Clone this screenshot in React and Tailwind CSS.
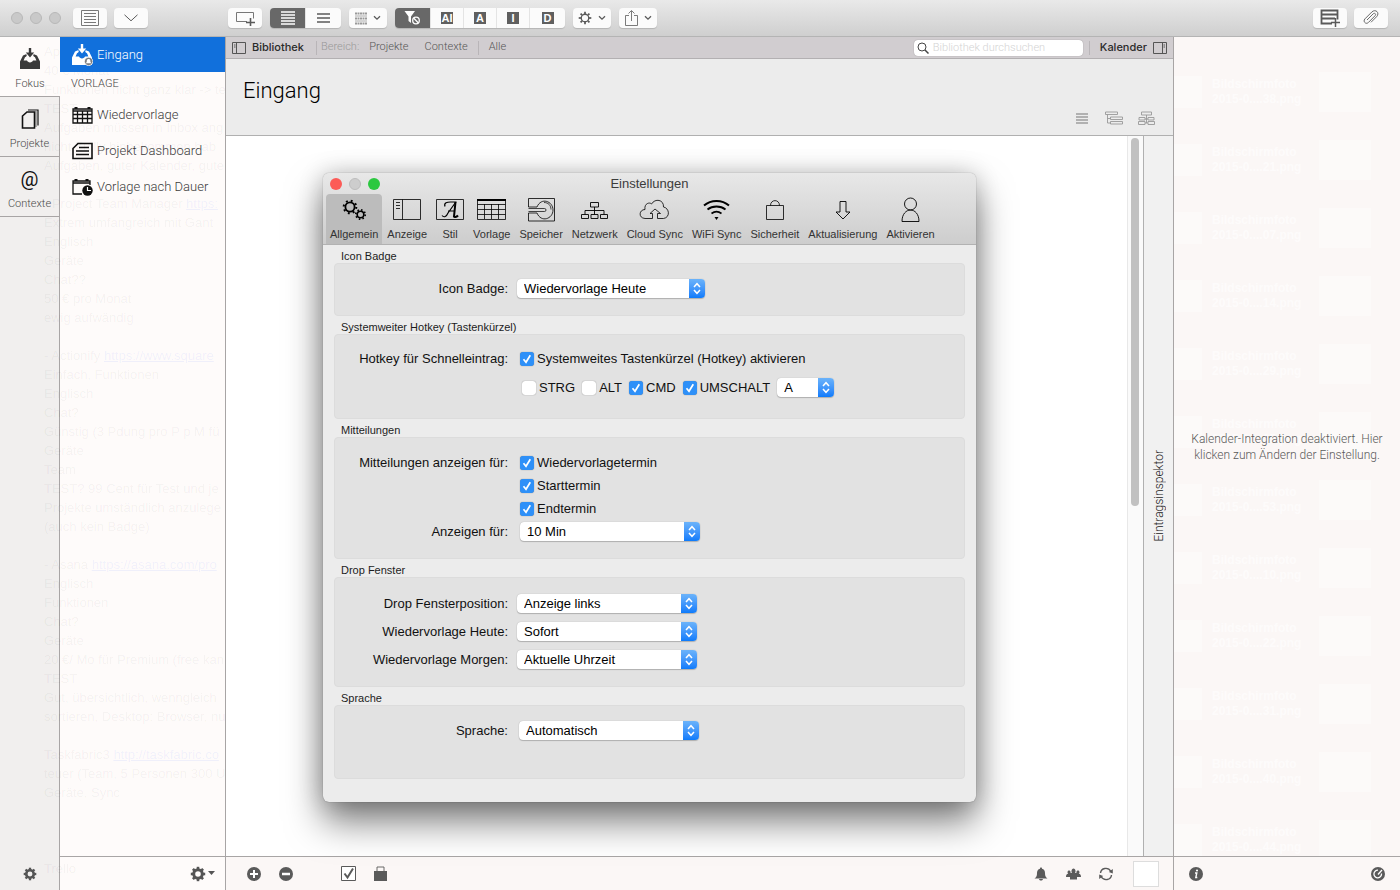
import React, { useState } from "react";

const notes = [
  ["App"],
  ["40 € Monat"],
  ["Funktionen nicht ganz klar -> te"],
  ["TEST"],
  ["Aufgaben müssen in Inbox ang"],
  ["nicht Zuilly hinbekommen hab"],
  ["Aufgaben, guter Kalender, gute"],
  [""],
  ["- Project Team Manager ", "https:"],
  ["Extrem umfangreich mit Gant"],
  ["Englisch"],
  ["Geräte"],
  ["Chat??"],
  ["50 € pro Monat"],
  ["ewig aufwändig"],
  [""],
  ["- Actionify ", "https://www.square"],
  ["Einfach, Funktionen"],
  ["Englisch"],
  ["Chat?"],
  ["Günstig (3 Pdung pro P p M fü"],
  ["Geräte"],
  ["Team"],
  ["TEST? 99 Cent für Test und je"],
  ["Projekte umständlich anzulege"],
  ["(auch kein Badge)"],
  [""],
  ["- Asana ", "https://asana.com/pro"],
  ["Englisch"],
  ["Funktionen"],
  ["Chat?"],
  ["Geräte"],
  ["20 €/ Mo für Premium (free kan"],
  ["TEST"],
  ["Gut, übersichtlich, wenngleich"],
  ["sortieren, Desktop: Browser, nu"],
  [""],
  ["Taskfabric3 ", "http://taskfabric.co"],
  ["teuer (Team, 5 Personen 300 U"],
  ["Geräte, Sync"],
  [""],
  [""],
  [""],
  ["Trello"],
];

const files = ["38", "21", "07", "14", "29", "35", "53", "10", "22", "31", "40", "44"];

function Svg({ w, h = w, children, className = "" }) {
  return (
    <svg
      width={w}
      height={h}
      viewBox={`0 0 ${w} ${h}`}
      fill="none"
      stroke="currentColor"
      className={`shrink-0 ${className}`}
      aria-hidden="true"
    >
      {children}
    </svg>
  );
}

/* ---------- shared icons ---------- */

function Gear({ size = 16, filled = false }) {
  const teeth = [0, 45, 90, 135, 180, 225, 270, 315];
  return (
    <svg width={size} height={size} viewBox="0 0 16 16" fill="none" stroke="currentColor" className="shrink-0" aria-hidden="true">
      <circle cx="8" cy="8" r="4.3" strokeWidth={filled ? 3 : 1.5} />
      {teeth.map((a) => (
        <path key={a} d="M8 .8v2.6" strokeWidth={filled ? 2.6 : 2} transform={`rotate(${a} 8 8)`} />
      ))}
    </svg>
  );
}

function Chevron() {
  return (
    <Svg w={8} h={6}>
      <path d="M1 1.2 4 4.2 7 1.2" strokeWidth="1.3" />
    </Svg>
  );
}

function Inbox({ badge }) {
  return (
    <Svg w={22}>
      <path
        d="M1 13.5 4 7.5 7 6.2C8.4 6.4 8 8.4 6 9.2L4.6 12.6H8C8.6 15 13.4 15 14 12.6H17.4L16 9.2C14 8.4 13.6 6.4 15 6.2L18 7.5 21 13.5V21H1Z"
        fill="currentColor"
        stroke="none"
      />
      <path d="M9.8 0h2.4v4.6h3L11 9.4 6.8 4.6h3Z" fill="currentColor" stroke="none" />
      {badge && (
        <>
          <circle cx="17.6" cy="17.4" r="4.2" fill="#7d7d7d" stroke="#fff" strokeWidth=".8" />
          <path d="M14.8 19.2c.9-.8 1-1.5 1-2.4 0-2.3 3.6-2.3 3.6 0 0 .9.1 1.6 1 2.4Z" fill="#fff" stroke="none" />
        </>
      )}
    </Svg>
  );
}

function ListIcon({ w = 14, gap = 3, count = 4, stroke = 1.5 }) {
  const h = gap * (count - 1) + 4;
  return (
    <Svg w={w} h={h}>
      {Array.from({ length: count }, (_, i) => (
        <path key={i} d={`M0 ${2 + i * gap}h${w}`} strokeWidth={stroke} />
      ))}
    </Svg>
  );
}

/* ---------- toolbar ---------- */

function ToolButton({ label, children, className = "w-[34px]" }) {
  return (
    <button
      type="button"
      aria-label={label}
      className={`flex h-5 items-center justify-center gap-1.5 rounded bg-[#fbfbfb] text-[#5a5a5a] shadow-[0_1px_1px_rgba(0,0,0,0.15)] ${className}`}
    >
      {children}
    </button>
  );
}

function Segment({ label, active, children, className = "w-[33px]" }) {
  return (
    <button
      type="button"
      aria-label={label}
      aria-pressed={!!active}
      className={`flex h-5 items-center justify-center border-r border-[#e4e4e4] last:border-r-0 ${
        active ? "bg-[#686868] text-white" : "bg-[#fbfbfb] text-[#5a5a5a]"
      } ${className}`}
    >
      {children}
    </button>
  );
}

function Letter({ children }) {
  return (
    <span className="flex h-3 w-3 items-center justify-center bg-[#5f5f5f] font-['Liberation_Sans',sans-serif] text-[11px] leading-3 font-bold text-white">
      {children}
    </span>
  );
}

function TitleBar() {
  return (
    <header className="flex h-[37px] shrink-0 items-center border-b border-[#b4b4b4] bg-linear-to-b from-[#e9e9e9] to-[#cfcfcf]">
      <div className="flex w-[228px] shrink-0 items-center gap-[7px] pl-[11px]">
        {[0, 1, 2].map((i) => (
          <span key={i} className="h-3 w-3 rounded-full border border-[#b8b8b8] bg-[#c9c9c9]" />
        ))}
        <div className="ml-[5px] flex gap-[7px]">
          <ToolButton label="Liste">
            <Svg w={18} h={16} className="text-[#777]">
              <path d="M.5.5h17v15H.5zM3 3.5h12M3 6.5h12M3 9.5h12M3 12.5h12" />
            </Svg>
          </ToolButton>
          <ToolButton label="Aufklappen">
            <Svg w={14} h={8}>
              <path d="m.5.8 6.5 6 6.5-6" />
            </Svg>
          </ToolButton>
        </div>
      </div>

      <div className="flex flex-1 items-center gap-2">
        <ToolButton label="Neuer Eintrag">
          <Svg w={20} h={16}>
            <path d="M12 11.5H1.5v-9h17v6" className="text-[#777]" stroke="currentColor" />
            <path d="M15.5 8v8M11 12.5h9" strokeWidth="1.6" />
          </Svg>
        </ToolButton>
        <div className="flex overflow-hidden rounded shadow-[0_1px_1px_rgba(0,0,0,0.15)]">
          <Segment label="Kompakt" active className="w-9">
            <ListIcon count={5} gap={3} stroke={1.6} />
          </Segment>
          <Segment label="Normal" className="w-[35px]">
            <ListIcon w={13} count={3} gap={4} />
          </Segment>
        </div>
        <ToolButton label="Gruppieren" className="w-[38px]">
          <Svg w={12} h={13} className="text-[#999]">
            <path d="M0 1.5h12M0 6.5h12M0 11.5h12" strokeWidth="2" strokeDasharray="2 .5" />
            <path d="M0 4h12M0 9h12" strokeWidth=".8" />
          </Svg>
          <Chevron />
        </ToolButton>
        <div className="flex overflow-hidden rounded shadow-[0_1px_1px_rgba(0,0,0,0.15)]">
          <Segment label="Filter aus" active className="w-9">
            <Svg w={17} h={14}>
              <path d="M.5 0h10.5L7 5.5V12L4.5 10V5.5Z" fill="currentColor" stroke="none" />
              <circle cx="12" cy="9.5" r="4.8" fill="#686868" stroke="none" />
              <circle cx="12" cy="9.5" r="3.3" strokeWidth="1.3" />
              <path d="m9.8 7.3 4.4 4.4" strokeWidth="1.3" />
            </Svg>
          </Segment>
          <Segment label="Alle Filter"><Letter>AI</Letter></Segment>
          <Segment label="Filter A"><Letter>A</Letter></Segment>
          <Segment label="Filter I"><Letter>I</Letter></Segment>
          <Segment label="Filter D" className="w-[35px]"><Letter>D</Letter></Segment>
        </div>
        <ToolButton label="Aktionen" className="w-[38px]">
          <Gear size={14} />
          <Chevron />
        </ToolButton>
        <ToolButton label="Teilen" className="w-[38px]">
          <Svg w={13} h={16}>
            <path d="M4 5.5H.5v10h12v-10H9M6.5 11V1M3.5 3.5l3-3 3 3" strokeWidth=".8" />
          </Svg>
          <Chevron />
        </ToolButton>
      </div>

      <div className="flex items-center gap-[7px] pr-3">
        <ToolButton label="Liste hinzufügen">
          <Svg w={20} h={18}>
            <path d="M12 14.5H1.5v-13h16v9M1 5.5h16M1 9.5h14" strokeWidth="1.8" />
            <path d="M15.5 9v9M11 13.5h9" strokeWidth="1.5" />
          </Svg>
        </ToolButton>
        <ToolButton label="Anhang">
          <Svg w={16} h={16}>
            <path d="m4 10 6-6c1.7-1.7 3.6.2 2 1.8L5.5 12.4C3 15-.6 11.4 2 8.8L8.8 2c3.8-3.6 8.4 1 4.8 4.7L8 12.3" strokeWidth=".9" />
          </Svg>
        </ToolButton>
      </div>
    </header>
  );
}

/* ---------- left side ---------- */

function RailTab({ label, active, children }) {
  return (
    <button
      type="button"
      className={`flex w-full flex-col items-center border-b border-[#a8a5a5] pt-2.5 text-[11px] font-light text-[#4a4a4a] ${
        active ? "h-[60px] bg-[#fefbfa]" : "h-[60px] border-r bg-[#f1efee]"
      }`}
    >
      <span className="flex h-6 items-center text-[#111]">{children}</span>
      <span className="mt-1 leading-[18px]">{label}</span>
    </button>
  );
}

function Rail() {
  return (
    <nav className="flex w-[60px] shrink-0 flex-col bg-[#f1efee]">
      <RailTab label="Fokus" active>
        <span className="text-[#3a3a3a]"><Inbox /></span>
      </RailTab>
      <RailTab label="Projekte">
        <Svg w={18} h={20}>
          <path d="M1.5 7 6 3h7.500v16h-12Z" strokeWidth="1.6" />
          <path d="M7 1h10v15.5" strokeWidth="1.2" />
          <path d="M15 2v16" strokeWidth=".6" />
        </Svg>
      </RailTab>
      <RailTab label="Contexte">
        <span className="text-[20px] leading-5 font-normal">@</span>
      </RailTab>
      <div className="flex flex-1 items-end justify-center border-r border-[#a8a5a5] pb-[9px]">
        <button type="button" aria-label="Einstellungen" className="text-[#555]">
          <Gear size={14} filled />
        </button>
      </div>
    </nav>
  );
}

function SideItem({ icon, children }) {
  return (
    <li>
      <a href="#vorlage" className="flex h-9 items-center gap-1 pl-3 text-[13px] font-light text-[#3c3c3c]">
        <span className="text-[#111]">{icon}</span>
        {children}
      </a>
    </li>
  );
}

function Sidebar() {
  return (
    <aside className="flex w-[166px] shrink-0 flex-col border-r border-[#a8a5a5] bg-[#fefbfa]">
      <a href="#eingang" className="relative z-10 flex h-[35px] items-center gap-1 bg-[#1170dc] pl-[11px] text-[13px] font-light text-white">
        <Inbox badge />
        Eingang
      </a>
      <h2 className="flex h-[25px] items-center pl-[11px] text-[11px] font-light text-[#444]">VORLAGE</h2>
      <ul className="flex-1">
        <SideItem
          icon={
            <Svg w={21} h={18}>
              <path d="M1 3h19v14H1zM1 5h19M1 8.5h19M1 12.5h19M5.5 5v12M10.5 5v12M15.5 5v12" strokeWidth="1.3" />
              <path d="M4 1v2M17 1v2" strokeWidth="3" />
            </Svg>
          }
        >
          Wiedervorlage
        </SideItem>
        <SideItem
          icon={
            <Svg w={21} h={18}>
              <path d="M1 6.5 6 1.5h14v15H1Z" strokeWidth="1.6" />
              <path d="M7 5.5h10M4 9h13M4 12.5h13" strokeWidth="1.4" />
            </Svg>
          }
        >
          Projekt Dashboard
        </SideItem>
        <SideItem
          icon={
            <Svg w={21} h={18}>
              <path d="M10 16H1V3h17v4M1 5h17" strokeWidth="1.3" />
              <path d="M4 1v2M15 1v2" strokeWidth="3" />
              <circle cx="15.5" cy="12.5" r="5.2" fill="currentColor" stroke="none" />
              <path d="M15.5 9v3.5H19" stroke="#fff" strokeWidth="1.2" />
            </Svg>
          }
        >
          Vorlage nach Dauer
        </SideItem>
      </ul>
      <div className="flex h-[34px] items-center justify-end border-t border-[#a8a5a5] pr-2.5">
        <button type="button" aria-label="Aktionen" className="flex items-center gap-0.5 text-[#555]">
          <Gear size={16} filled />
          <Svg w={7} h={5}>
            <path d="M0 0h7L3.5 4Z" fill="currentColor" stroke="none" />
          </Svg>
        </button>
      </div>
    </aside>
  );
}

/* note text of the window behind shines through the translucent sidebar */
function NotesBehind() {
  return (
    <div aria-hidden="true" className="pointer-events-none absolute inset-0 overflow-hidden pt-[5px] pl-11 font-['Liberation_Sans',sans-serif] text-[13px] leading-[19px] whitespace-nowrap text-black/5">
      {notes.map(([text, link], i) => (
        <p key={i} className="h-[19px]">
          {text}
          {link && <span className="text-[#4060ff]/8 underline">{link}</span>}
        </p>
      ))}
    </div>
  );
}

/* ---------- preferences window ---------- */

const tabs = [
  {
    label: "Allgemein",
    icon: (
      <Svg w={26} h={24}>
        <g transform="translate(1 1)">
          <circle cx="8" cy="8" r="4.6" strokeWidth="1.8" />
          <circle cx="8" cy="8" r="6.3" strokeWidth="2" strokeDasharray="1.9 3.05" />
          <circle cx="18.5" cy="15.5" r="3.3" strokeWidth="1.6" />
          <circle cx="18.5" cy="15.5" r="4.7" strokeWidth="1.7" strokeDasharray="1.5 2.19" />
        </g>
      </Svg>
    ),
  },
  {
    label: "Anzeige",
    icon: (
      <Svg w={28} h={22}>
        <path d="M.5.5h27v20H.5zM9.5.5v20M3 3.5h4M3 6.5h4M3 9.5h4" strokeWidth=".8" />
      </Svg>
    ),
  },
  {
    label: "Stil",
    icon: (
      <Svg w={28} h={22}>
        <path d="M.5.5h27v20H.5z" strokeWidth=".8" />
        <path d="M6 16.5c2 2.5 4.5 1 6-2.5l7.5-10.5M12 12h7M9 7.5c-1.5-4 2.5-4.5 5.5-4.5h6" strokeWidth="1.2" />
        <path d="M19.5 3 18 17.5c1.5.8 3 .2 4-1" strokeWidth="2" />
      </Svg>
    ),
  },
  {
    label: "Vorlage",
    icon: (
      <Svg w={29} h={22}>
        <path d="M.5 1.5h28v19H.5zM.5 5.5h28M.5 10.5h28M.5 15.5h28M7.5 5v15M14.5 5v15M21.5 5v15" strokeWidth=".8" />
        <path d="M0 1h29" strokeWidth="2" />
      </Svg>
    ),
  },
  {
    label: "Speicher",
    icon: (
      <Svg w={27} h={24}>
        <path d="M.5 9V.5h26V23H.5v-8" strokeWidth=".8" />
        <path d="M.5 9H9C13-1 25 3 25 12S13 25 9 15H.5" strokeWidth=".8" />
        <path d="M.5 10.5h16a1.5 1.5 0 0 1 0 3H.5M16 4.5c4.500 0 7 3.200 7 7" strokeWidth=".7" />
      </Svg>
    ),
  },
  {
    label: "Netzwerk",
    icon: (
      <Svg w={27} h={20}>
        <path d="M9.5 2.5h8V7h-8zM.5 14.5h7v4h-7zM10 14.5h7v4h-7zM19.5 14.5h7v4h-7zM13.5 7v7.5M4 14.5v-4h19v4" strokeWidth=".9" />
      </Svg>
    ),
  },
  {
    label: "Cloud Sync",
    icon: (
      <Svg w={31} h={22}>
        <path d="M12 19.5H6C-1 19 0 10.5 6 10.5 5 4 11 3 12.5 5 16-1 25 .5 24.5 8c6 1 7 10.5 0 11.5h-6v-5h3L16 10l-5 4.5h2.5v5H12" strokeWidth=".8" />
      </Svg>
    ),
  },
  {
    label: "WiFi Sync",
    icon: (
      <Svg w={27} h={22}>
        <path d="M1 6.5c7-6 18-6 25 0" strokeWidth="2" />
        <path d="M4.5 10.5c5-4 13-4 18 0" strokeWidth="1.8" />
        <path d="M8.5 14.5c3-2.3 7-2.3 10 0" strokeWidth="1.6" />
        <path d="m11.5 18 2 3 2-3Z" fill="currentColor" stroke="none" />
      </Svg>
    ),
  },
  {
    label: "Sicherheit",
    icon: (
      <Svg w={18} h={20}>
        <path d="M.5 5.5h17v14H.5zM4.5 5.5c0-6.5 9-6.5 9 0" strokeWidth=".8" />
      </Svg>
    ),
  },
  {
    label: "Aktualisierung",
    icon: (
      <Svg w={16} h={20}>
        <path d="M5 1.5h6V12h4l-7 7-7-7h4Z" strokeWidth=".9" />
      </Svg>
    ),
  },
  {
    label: "Aktivieren",
    icon: (
      <Svg w={19} h={26}>
        <circle cx="9.5" cy="7" r="6" strokeWidth=".9" />
        <path d="M1 24.5c0-15.3 17-15.3 17 0Z" strokeWidth=".9" />
      </Svg>
    ),
  },
];

function Select({ id, label, value, options, className }) {
  return (
    <span className={`relative inline-flex h-5 rounded ${className}`}>
      <select
        id={id}
        aria-label={label}
        defaultValue={value}
        className="h-[19px] w-full appearance-none rounded bg-white pr-5 pl-[7px] text-[13px] leading-[18px] text-black shadow-[0_0_1px_rgba(0,0,0,0.3),0_1px_1px_rgba(0,0,0,0.2)]"
      >
        {options.map((o) => (
          <option key={o}>{o}</option>
        ))}
      </select>
      <span className="pointer-events-none absolute top-0 right-0 flex h-[19px] w-4 items-center justify-center rounded-r bg-linear-to-b from-[#6bb3fa] to-[#0b7bfb] text-white">
        <Svg w={8} h={13}>
          <path d="m1 5 3-3.3L7 5M1 8l3 3.3L7 8" strokeWidth="1.5" />
        </Svg>
      </span>
    </span>
  );
}

function Check({ label, initial = true }) {
  const [on, setOn] = useState(initial);
  return (
    <label className="flex items-center gap-[3px]">
      <span className="relative flex">
        <input
          type="checkbox"
          checked={on}
          onChange={() => setOn(!on)}
          className="h-3.5 w-3.5 appearance-none rounded-[3px] bg-white shadow-[0_0_1px_rgba(0,0,0,0.5)] checked:bg-[#2e90f8]"
        />
        {on && (
          <span className="pointer-events-none absolute inset-0 text-white">
            <Svg w={14}>
              <path d="m3.5 7.3 2.5 3 4.3-7" strokeWidth="1.7" />
            </Svg>
          </span>
        )}
      </span>
      {label}
    </label>
  );
}

function Section({ title, children, className }) {
  return (
    <section>
      <h3 className="flex h-[18px] items-end pl-[7px] text-[11px] leading-[14px] text-[#1c1c1c]">{title}</h3>
      <div className={`flex flex-col rounded border border-[#dcdcdc] bg-[#e2e2e2] text-[13px] leading-5 text-[#111] ${className}`}>
        {children}
      </div>
    </section>
  );
}

function Row({ label, htmlFor, indent = "pl-[9px]", children }) {
  return (
    <div className="flex h-5 items-center">
      <label htmlFor={htmlFor} className="w-[173px] shrink-0 text-right">
        {label}
      </label>
      <div className={`flex items-center ${indent}`}>{children}</div>
    </div>
  );
}

function Preferences() {
  const [tab, setTab] = useState("Allgemein");
  return (
    <div
      role="dialog"
      aria-label="Einstellungen"
      className="absolute top-[136px] left-[97px] w-[653px] rounded-md bg-[#ececec] pb-[23px] font-['Liberation_Sans',Arial,sans-serif] shadow-[0_0_1px_rgba(0,0,0,0.5),0_20px_36px_rgba(0,0,0,0.5),0_0_24px_rgba(0,0,0,0.2)]"
    >
      <div className="rounded-t-md border-b border-[#b2b2b2] bg-linear-to-b from-[#e8e8e8] to-[#cdcdcd]">
        <div className="grid h-[21px] grid-cols-3 items-center">
          <div className="flex gap-[7px] pl-[7px]">
            <span className="h-3 w-3 rounded-full bg-[#fc5b57]" />
            <span className="h-3 w-3 rounded-full border border-[#bdbdbd] bg-[#cdcdcd]" />
            <span className="h-3 w-3 rounded-full bg-[#2cc840]" />
          </div>
          <h2 className="text-center text-[13px] text-[#3c3c3c]">Einstellungen</h2>
        </div>
        <div className="flex gap-px pl-[3px]" role="tablist">
          {tabs.map((t) => (
            <button
              key={t.label}
              type="button"
              role="tab"
              aria-selected={tab === t.label}
              onClick={() => setTab(t.label)}
              className={`flex h-[50px] flex-col items-center rounded-t px-1 text-[11px] leading-4 ${
                tab === t.label ? "bg-[#bcbcbc]" : ""
              }`}
            >
              <span className="flex h-8 items-center text-black">{t.icon}</span>
              <span className="whitespace-nowrap text-[#333]">{t.label}</span>
            </button>
          ))}
        </div>
      </div>

      <div className="px-[11px]">
        <Section title="Icon Badge" className="pt-[15px] pb-4">
          <Row label="Icon Badge:" htmlFor="badge">
            <Select id="badge" value="Wiedervorlage Heute" options={["Wiedervorlage Heute", "Eingang"]} className="w-[188px]" />
          </Row>
        </Section>

        <Section title="Systemweiter Hotkey (Tastenkürzel)" className="gap-[9px] pt-3.5 pb-5">
          <Row label="Hotkey für Schnelleintrag:" indent="pl-3">
            <Check label="Systemweites Tastenkürzel (Hotkey) aktivieren" />
          </Row>
          <Row indent="gap-[7px] pl-3.5">
            <Check label="STRG" initial={false} />
            <Check label="ALT" initial={false} />
            <Check label="CMD" />
            <Check label="UMSCHALT" />
            <Select label="Taste" value="A" options={["A", "B", "C", "D"]} className="w-[57px]" />
          </Row>
        </Section>

        <Section title="Mitteilungen" className="gap-[3px] pt-[15px] pb-4">
          <Row label="Mitteilungen anzeigen für:" indent="pl-3">
            <Check label="Wiedervorlagetermin" />
          </Row>
          <Row indent="pl-3">
            <Check label="Starttermin" />
          </Row>
          <Row indent="pl-3">
            <Check label="Endtermin" />
          </Row>
          <Row label="Anzeigen für:" htmlFor="dauer" indent="pl-3">
            <Select id="dauer" value="10 Min" options={["5 Min", "10 Min", "30 Min"]} className="w-[180px]" />
          </Row>
        </Section>

        <Section title="Drop Fenster" className="gap-2 py-4">
          <Row label="Drop Fensterposition:" htmlFor="position">
            <Select id="position" value="Anzeige links" options={["Anzeige links", "Anzeige rechts"]} className="w-[180px]" />
          </Row>
          <Row label="Wiedervorlage Heute:" htmlFor="heute">
            <Select id="heute" value="Sofort" options={["Sofort", "Aktuelle Uhrzeit"]} className="w-[180px]" />
          </Row>
          <Row label="Wiedervorlage Morgen:" htmlFor="morgen">
            <Select id="morgen" value="Aktuelle Uhrzeit" options={["Sofort", "Aktuelle Uhrzeit"]} className="w-[180px]" />
          </Row>
        </Section>

        <Section title="Sprache" className="pt-[15px] pb-[37px]">
          <Row label="Sprache:" htmlFor="sprache" indent="pl-[11px]">
            <Select id="sprache" value="Automatisch" options={["Automatisch", "Deutsch", "Englisch"]} className="w-[180px]" />
          </Row>
        </Section>
      </div>
    </div>
  );
}

/* ---------- main area ---------- */

function PanelIcon({ flip }) {
  return (
    <Svg w={14} h={12} className={flip ? "-scale-x-100 text-[#555]" : "text-[#555]"}>
      <path d="M.5.5h13v11H.5zM4.5.5v11M2 3h1.500M2 5h1.500" />
    </Svg>
  );
}

function LibraryBar() {
  return (
    <div className="flex h-[22px] shrink-0 items-center border-b border-[#b3b0b2] bg-[#d1cdd0] px-1.5 text-[11px] font-light text-[#555]">
      <button type="button" className="flex items-center gap-1.5 font-['Inter',sans-serif] font-medium text-[#2a2a2a]">
        <PanelIcon />
        Bibliothek
      </button>
      <span className="mr-1 ml-3 h-3.5 border-l border-[#b9b5b8]" />
      <span className="text-[#999]">Bereich:</span>
      <button type="button" className="ml-2.5">Projekte</button>
      <button type="button" className="ml-4">Contexte</button>
      <span className="mx-2.5 h-3.5 border-l border-[#b9b5b8]" />
      <button type="button">Alle</button>
      <label className="ml-auto flex h-4 w-[169px] items-center gap-1 rounded-sm bg-white px-[3px] shadow-[0_0_1px_rgba(0,0,0,0.4)]">
        <Svg w={12} className="text-[#444]">
          <circle cx="5" cy="5" r="4" />
          <path d="m8 8 3.5 3.5" strokeWidth="1.5" />
        </Svg>
        <input
          type="search"
          aria-label="Bibliothek durchsuchen"
          placeholder="Bibliothek durchsuchen"
          className="w-full min-w-0 bg-transparent text-[11px] leading-4 outline-none placeholder:text-[#d4d4d4]"
        />
      </label>
      <span className="mr-2.5 ml-1.5 h-3.5 border-l border-[#b9b5b8]" />
      <button type="button" className="flex items-center gap-1.5 font-['Inter',sans-serif] font-medium text-[#2a2a2a]">
        Kalender
        <PanelIcon flip />
      </button>
    </div>
  );
}

function StatusBar() {
  return (
    <footer className="flex h-[34px] shrink-0 items-center border-t border-[#a8a5a5] bg-[#fbf7f6] pr-3.5 pl-[21px] text-[#5a5a5a]">
      <button type="button" aria-label="Hinzufügen">
        <Svg w={14}>
          <circle cx="7" cy="7" r="7" fill="currentColor" stroke="none" />
          <path d="M7 3v8M3 7h8" stroke="#fff" strokeWidth="2" />
        </Svg>
      </button>
      <button type="button" aria-label="Entfernen" className="ml-[18px]">
        <Svg w={14}>
          <circle cx="7" cy="7" r="7" fill="currentColor" stroke="none" />
          <path d="M3 7h8" stroke="#fff" strokeWidth="2.5" />
        </Svg>
      </button>
      <button type="button" aria-label="Erledigt" className="ml-12">
        <Svg w={15}>
          <path d="M.5.5h14v14H.5z" fill="#fff" />
          <path d="m3.5 7.5 3 4 5.5-9" strokeWidth="2" />
        </Svg>
      </button>
      <button type="button" aria-label="Sperren" className="ml-[18px]">
        <Svg w={13} h={15}>
          <path d="M0 5h13v10H0Z" fill="currentColor" stroke="none" />
          <path d="M3 5V1h7v4" strokeWidth=".9" />
        </Svg>
      </button>

      <div className="ml-auto flex items-center gap-[18px]">
        <button type="button" aria-label="Mitteilungen">
          <Svg w={14}>
            <path d="M7 .5c.8 0 1 .5 1 1.2 2 .5 3 2 3 4.3 0 3 .5 4 2.5 5.5H.5C2.5 10 3 9 3 6c0-2.300 1-3.800 3-4.300 0-.7.2-1.200 1-1.200ZM5 12h4c-.5 2-3.500 2-4 0Z" fill="currentColor" stroke="none" />
          </Svg>
        </button>
        <button type="button" aria-label="Team">
          <Svg w={15} h={12}>
            <path d="M5.5 3c0-3.500 4-3.500 4 0 0 1 0 1.500-.5 2h1.500c-.8-3 3-3.500 3-.8 0 .8-.3 1.200-.8 1.500C14.5 6 15 7 15 9h-4v2.500H4V9H0c0-2 .5-3 2.300-3.300-.5-.3-.8-.7-.8-1.500 0-2.700 3.800-2.200 3 .8H6c-.5-.5-.5-1-.5-2Z" fill="currentColor" stroke="none" />
          </Svg>
        </button>
        <button type="button" aria-label="Synchronisieren">
          <Svg w={14}>
            <path d="M1.5 6C2 1 9-.5 12 4.500M12.5 8C12 13 5 14.500 2 9.500" strokeWidth="1.4" />
            <path d="M13.8 2v4.500l-4-1.500ZM.2 12V7.500l4 1.500Z" fill="currentColor" stroke="none" />
          </Svg>
        </button>
        <span className="ml-0.5 h-[26px] w-[26px] border border-[#ddd] bg-white" />
      </div>
    </footer>
  );
}

function Main() {
  return (
    <main className="relative flex min-w-0 flex-1 flex-col">
      <LibraryBar />
      <div className="flex h-[77px] shrink-0 items-start justify-between border-b border-[#b0b0b0] bg-[#ececec] pr-[18px] pl-[17px]">
        <h1 className="pt-4 text-[22px] leading-8 font-light text-black">Eingang</h1>
        <div className="flex items-center gap-[15px] self-end pb-2.5 text-[#999]">
          <button type="button" aria-label="Liste" className="mr-0.5 text-[#777]">
            <ListIcon w={12} count={4} gap={3} stroke={1} />
          </button>
          <button type="button" aria-label="Baum">
            <Svg w={18} h={14}>
              <path d="M.5 1h12v2.500H.5zM5.5 6h12v2.500h-12zM5.5 10.500h12V13h-12zM2.5 3.500V12h3M2.5 7.500h3" strokeWidth=".9" />
            </Svg>
          </button>
          <button type="button" aria-label="Organigramm">
            <Svg w={17} h={14}>
              <path d="M3.5 1h10v3h-10zM1 6.500h6V9H1zM10 6.500h6V9h-6zM.5 10.500H7v3H.5zM10 10.500h6.500v3H10zM8.5 4v8M7 8h3M7 12h3" strokeWidth=".9" />
            </Svg>
          </button>
        </div>
      </div>

      <div className="flex min-h-0 flex-1 bg-white">
        <div className="flex-1" />
        <div className="w-4 border-l border-[#e8e8e8] bg-[#fafafa] pt-0.5 pl-[3px]">
          <div className="h-[368px] w-2 rounded-full bg-[#c1c1c1]" />
        </div>
        <button type="button" className="flex w-[30px] items-center justify-center border-l border-[#b0b0b0] bg-[#f1f1f1] text-[12px] font-light text-[#222]">
          <span className="rotate-180 [writing-mode:vertical-rl]">Eintragsinspektor</span>
        </button>
      </div>
      <StatusBar />
      <Preferences />
    </main>
  );
}

/* ---------- calendar ---------- */

function CalendarPanel() {
  return (
    <aside className="relative flex w-[227px] shrink-0 flex-col border-l border-[#a8a5a5] bg-[#fbf7f6]">
      <div aria-hidden="true" className="pointer-events-none absolute inset-0 overflow-hidden pt-[21px] font-['Liberation_Sans',sans-serif] text-[12px] leading-[15px] font-bold whitespace-nowrap text-white/60">
        {files.map((n) => (
          <div key={n} className="flex h-[68px] items-center">
            <span className="h-8 w-7 bg-white/40" />
            <span className="ml-2.5 w-[107px]">
              Bildschirmfoto
              <br />
              2015-0....{n}.png
            </span>
            <span className="h-10 w-[52px] bg-white/40" />
          </div>
        ))}
      </div>
      <div className="relative z-10 flex flex-1 items-center justify-center">
        <button type="button" className="px-2 text-center text-[12px] leading-4 font-light text-[#5a5a5a]">
          Kalender-Integration deaktiviert. Hier
          <br />
          klicken zum Ändern der Einstellung.
        </button>
      </div>
      <div className="relative z-10 flex h-[34px] items-center justify-between border-t border-[#a8a5a5] bg-[#fbf7f6] px-[15px] text-[#5a5a5a]">
        <button type="button" aria-label="Info">
          <Svg w={14}>
            <circle cx="7" cy="7" r="7" fill="currentColor" stroke="none" />
            <path d="M6 6h1.800l-1 4.500h1.500" stroke="#fff" strokeWidth="1.4" />
            <circle cx="8" cy="3.5" r="1.1" fill="#fff" stroke="none" />
          </Svg>
        </button>
        <button type="button" aria-label="Aktualisieren">
          <Svg w={14}>
            <circle cx="7" cy="7" r="7" fill="currentColor" stroke="none" />
            <path d="M10.5 6.5A3.8 3.8 0 1 1 7 3.2" stroke="#fff" strokeWidth="1.3" />
            <path d="M7 7.5 11 3" stroke="#fff" strokeWidth="1.3" />
          </Svg>
        </button>
      </div>
    </aside>
  );
}

export default function App() {
  return (
    <div className="flex min-h-screen flex-col overflow-hidden bg-[#fbf7f6] font-['Roboto','Liberation_Sans',sans-serif]">
      <TitleBar />
      <div className="flex flex-1">
        <div className="relative flex shrink-0">
          <Rail />
          <Sidebar />
          <NotesBehind />
        </div>
        <Main />
        <CalendarPanel />
      </div>
    </div>
  );
}
